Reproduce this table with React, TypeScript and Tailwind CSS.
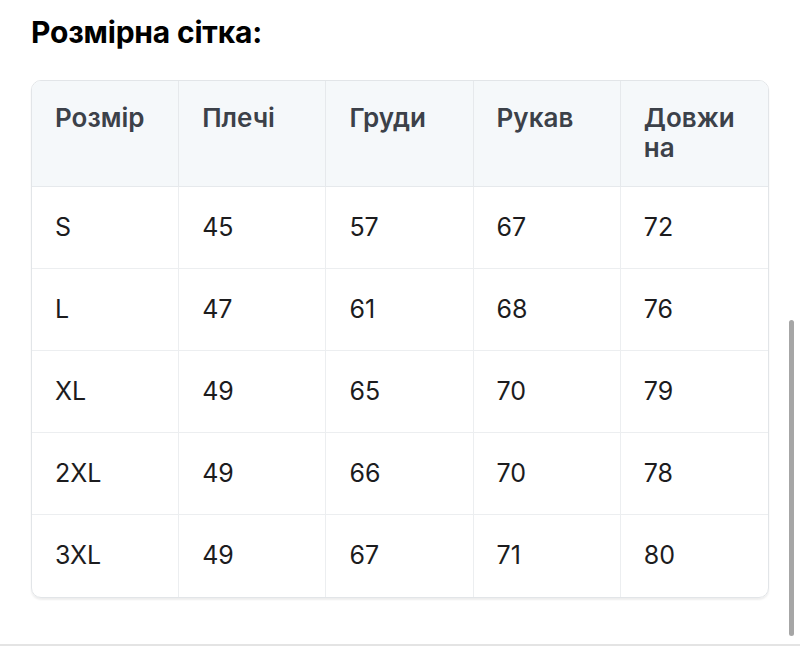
import React from "react";

const headers = ["Розмір", "Плечі", "Груди", "Рукав", "Довжина"];
const rows = [
  ["S", "45", "57", "67", "72"],
  ["L", "47", "61", "68", "76"],
  ["XL", "49", "65", "70", "79"],
  ["2XL", "49", "66", "70", "78"],
  ["3XL", "49", "67", "71", "80"],
];

export default function App() {
  return (
    <div
      className="relative w-[800px] h-[647px] bg-white overflow-hidden"
      style={{ fontFamily: "Inter, 'Noto Sans', sans-serif" }}
    >
      <div className="px-[31px] pt-[14px]">
        <h2 className="text-[30px] leading-[36px] font-bold text-black tracking-[-0.2px]">
          Розмірна сітка:
        </h2>
        <div className="mt-[30px] rounded-[10px] border border-[#e2e5e8] shadow-[0_2px_2px_rgba(0,0,0,0.07)] overflow-hidden">
          <div className="grid grid-cols-5">
            {headers.map((h, i) => (
              <div
                key={h}
                className={`bg-[#f5f8fa] border-b border-[#e6e9ec] ${i < 4 ? "border-r" : ""} pl-[23px] pr-[16px] pt-[22px] pb-[22px] h-[106px] text-[26px] leading-[30px] font-semibold text-[#3c4149]`}
              >
                {h === "Довжина" ? (
                  <>
                    Довжи
                    <br />
                    на
                  </>
                ) : (
                  h
                )}
              </div>
            ))}
            {rows.map((r, ri) =>
              r.map((c, ci) => (
                <div
                  key={`${ri}-${ci}`}
                  className={`${ri < 4 ? "border-b" : ""} ${ci < 4 ? "border-r" : ""} border-[#eceef0] pl-[23px] h-[82px] flex items-center text-[25px] text-[#1c1c1e]`}
                >
                  {c}
                </div>
              ))
            )}
          </div>
        </div>
      </div>
      <div className="absolute left-[789px] top-[320px] w-[5px] h-[316px] rounded-full bg-[#a6a6a6]" />
      <div className="absolute left-0 right-0 top-[644px] h-[2px] bg-[#e4e4e4]" />
    </div>
  );
}
